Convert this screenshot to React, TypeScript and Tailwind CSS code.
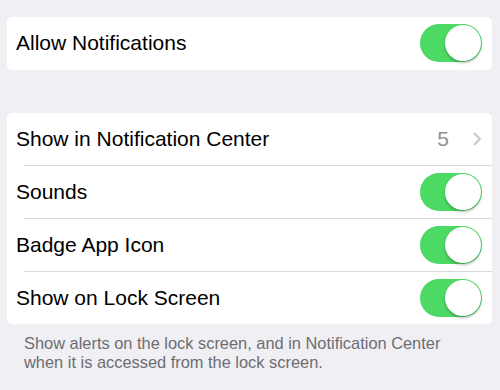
import React from 'react';

const Toggle: React.FC = () => (
  <div className="relative w-[62px] h-[38px] rounded-full bg-[#4cd964] shrink-0">
    <div className="absolute right-[1px] top-[1px] w-[36px] h-[36px] rounded-full bg-white shadow-[0_2px_3px_rgba(0,0,0,0.25)]"></div>
  </div>
);

const Row: React.FC<{ label: string; children?: React.ReactNode }> = ({ label, children }) => (
  <div className="flex h-[52px] items-center justify-between pl-[9px] pr-[10px]">
    <span className="text-[21px] text-black">{label}</span>
    {children}
  </div>
);

const Separator: React.FC = () => <div className="ml-[17px] h-px bg-[#d9d9dc]"></div>;

export default function App() {
  return (
    <div
      className="w-[500px] h-[390px] bg-[#efeff4] pt-[17px] overflow-hidden"
      style={{ fontFamily: '"Liberation Sans", Arial, sans-serif' }}
    >
      {/* Allow Notifications */}
      <div className="ml-[7px] w-[485px] h-[53px] bg-white rounded-[5px]">
        <Row label="Allow Notifications">
          <Toggle />
        </Row>
      </div>

      {/* Settings group */}
      <div className="ml-[7px] w-[485px] bg-white rounded-[5px] mt-[43px]">
        <Row label="Show in Notification Center">
          <div className="flex items-center gap-[24px]">
            <span className="text-[21px] text-[#8e8e93]">5</span>
            <svg width="9" height="14" viewBox="0 0 9 14" fill="none">
              <path d="M1.5 1.5 L7 7 L1.5 12.5" stroke="#c7c7cc" strokeWidth="2" strokeLinecap="round" strokeLinejoin="round" />
            </svg>
          </div>
        </Row>
        <Separator />
        <Row label="Sounds">
          <Toggle />
        </Row>
        <Separator />
        <Row label="Badge App Icon">
          <Toggle />
        </Row>
        <Separator />
        <Row label="Show on Lock Screen">
          <Toggle />
        </Row>
      </div>

      <p className="ml-[24px] mt-[10px] text-[16.4px] leading-[19px] text-[#6d6d72]">
        Show alerts on the lock screen, and in Notification Center
        <br />
        when it is accessed from the lock screen.
      </p>
    </div>
  );
}
